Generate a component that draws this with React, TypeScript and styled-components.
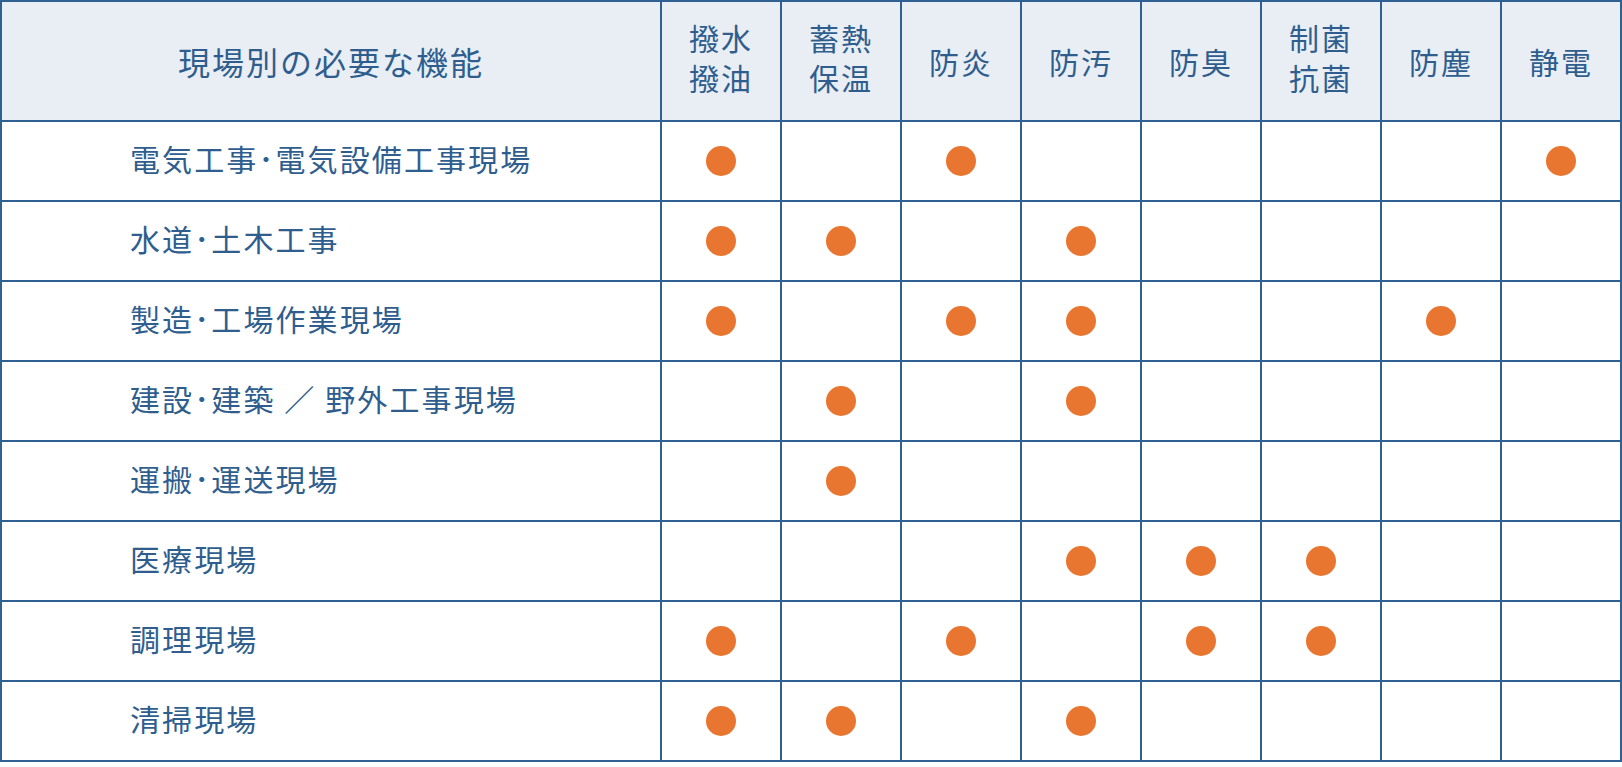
import React from "react";
import styled, { createGlobalStyle } from "styled-components";

const GlobalStyle = createGlobalStyle`
  html, body {
    margin: 0;
    padding: 0;
    background: #ffffff;
  }
  body {
    font-family: "Noto Sans CJK JP", "Noto Sans", sans-serif;
  }
`;

const BORDER = "#2e6192";
const TEXT = "#2f5e8e";

const Grid = styled.div`
  display: grid;
  grid-template-columns: 658px repeat(8, 118px);
  grid-template-rows: 118px repeat(8, 78px);
  gap: 2px;
  padding: 2px;
  background: ${BORDER};
  width: 1622px;
  box-sizing: border-box;
  color: ${TEXT};
`;

const Cell = styled.div<{ $head?: boolean }>`
  display: flex;
  align-items: center;
  justify-content: center;
  background: ${(p) => (p.$head ? "#e9eef5" : "#ffffff")};
`;

const TitleCell = styled(Cell)`
  font-size: 32px;
  letter-spacing: 2px;
  line-height: 1;
`;

const FeatureCell = styled(Cell)<{ $multi?: boolean }>`
  font-size: 30px;
  line-height: 40px;
  letter-spacing: 2px;
  text-align: center;
  flex-direction: column;
  padding-bottom: ${(p) => (p.$multi ? "8px" : "0")};
  box-sizing: border-box;
`;

const SiteCell = styled(Cell)`
  justify-content: flex-start;
  padding-left: 128px;
  padding-bottom: 6px;
  box-sizing: border-box;
  font-size: 30px;
  letter-spacing: 2.1px;
  line-height: 1;
  white-space: nowrap;
`;

const Dot = styled.span`
  width: 30px;
  height: 30px;
  border-radius: 50%;
  background: #e87530;
`;

const features: string[][] = [
  ["撥水", "撥油"],
  ["蓄熱", "保温"],
  ["防炎"],
  ["防汚"],
  ["防臭"],
  ["制菌", "抗菌"],
  ["防塵"],
  ["静電"],
];

type Row = { label: string; marks: number[] };

const rows: Row[] = [
  { label: "電気工事･電気設備工事現場", marks: [1, 0, 1, 0, 0, 0, 0, 1] },
  { label: "水道･土木工事", marks: [1, 1, 0, 1, 0, 0, 0, 0] },
  { label: "製造･工場作業現場", marks: [1, 0, 1, 1, 0, 0, 1, 0] },
  { label: "建設･建築 ／ 野外工事現場", marks: [0, 1, 0, 1, 0, 0, 0, 0] },
  { label: "運搬･運送現場", marks: [0, 1, 0, 0, 0, 0, 0, 0] },
  { label: "医療現場", marks: [0, 0, 0, 1, 1, 1, 0, 0] },
  { label: "調理現場", marks: [1, 0, 1, 0, 1, 1, 0, 0] },
  { label: "清掃現場", marks: [1, 1, 0, 1, 0, 0, 0, 0] },
];

export default function App() {
  return (
    <>
      <GlobalStyle />
      <Grid>
        <TitleCell $head>現場別の必要な機能</TitleCell>
        {features.map((lines, i) => (
          <FeatureCell $head $multi={lines.length > 1} key={i}>
            {lines.map((l) => (
              <span key={l}>{l}</span>
            ))}
          </FeatureCell>
        ))}
        {rows.map((r, ri) => (
          <React.Fragment key={ri}>
            <SiteCell>{r.label}</SiteCell>
            {r.marks.map((m, mi) => (
              <Cell key={mi}>{m ? <Dot /> : null}</Cell>
            ))}
          </React.Fragment>
        ))}
      </Grid>
    </>
  );
}
